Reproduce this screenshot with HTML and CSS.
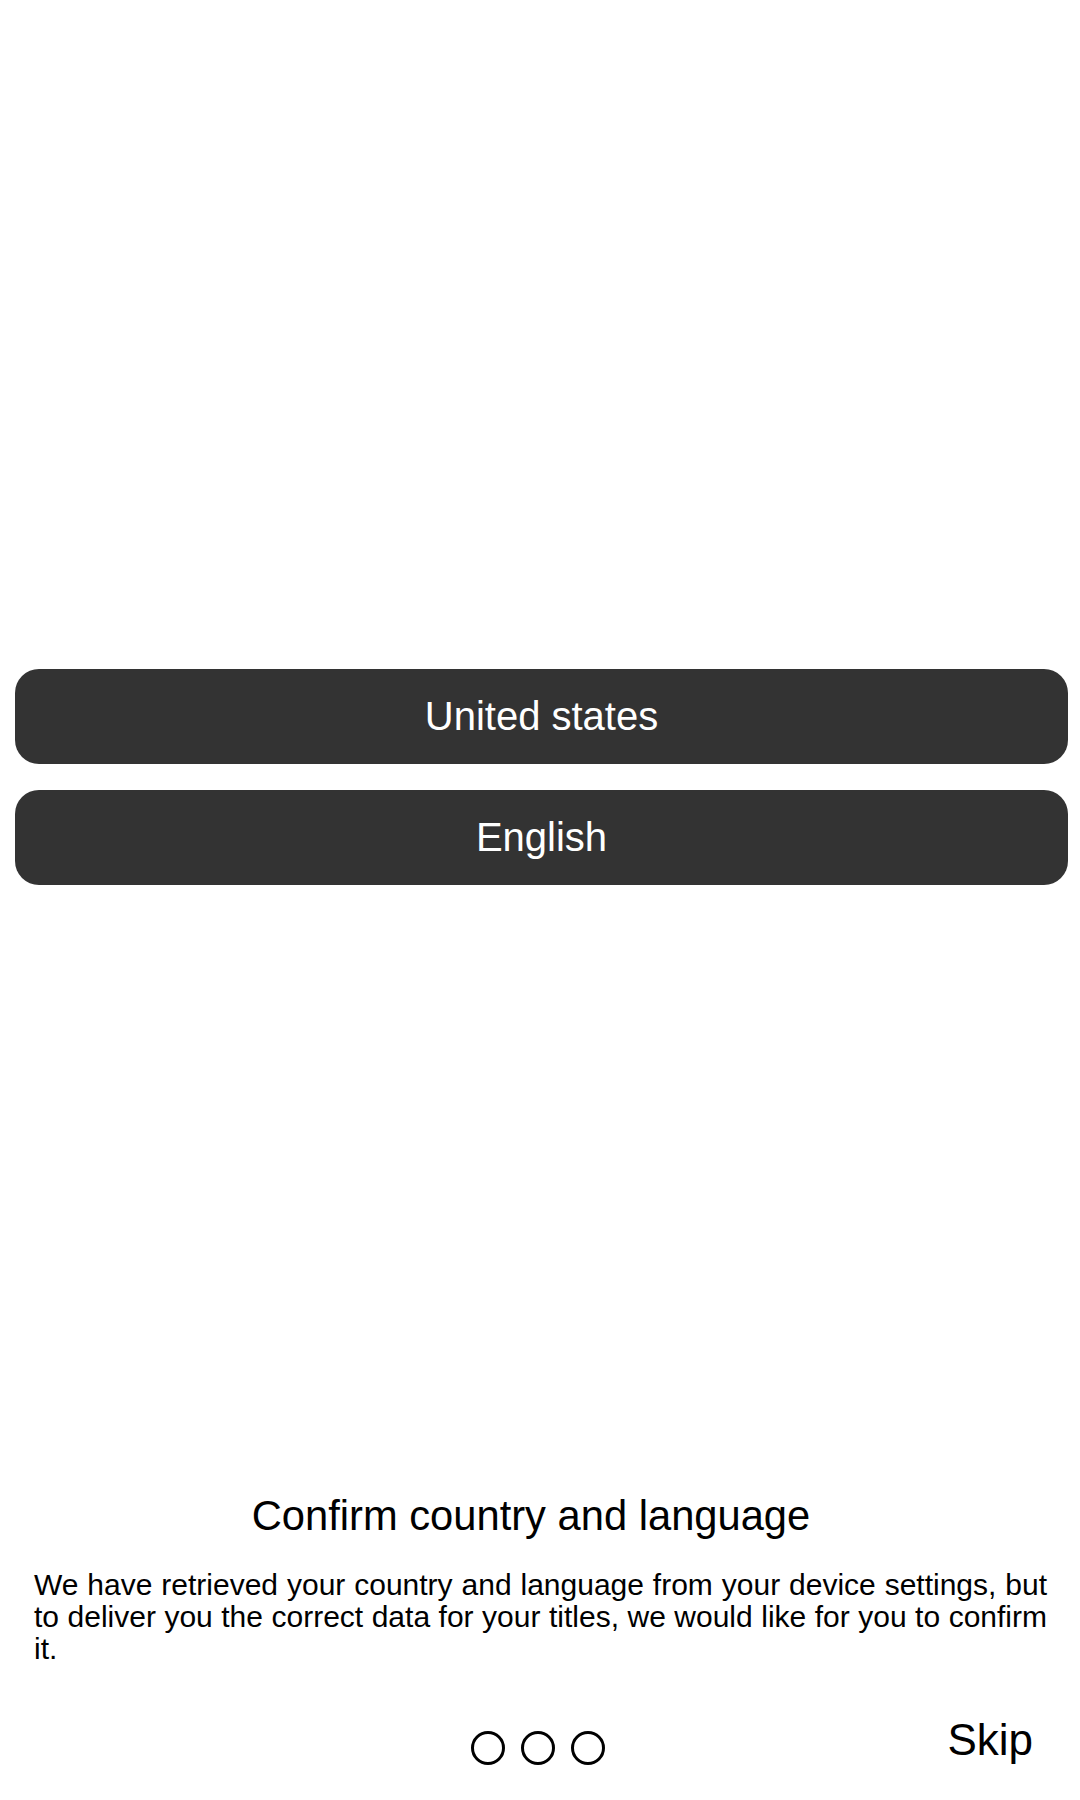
FILE: index.html
```html
<!DOCTYPE html>
<html lang="en">
<head>
<meta charset="utf-8">
<title>Confirm country and language</title>
<link rel="stylesheet" href="styles.css">
</head>
<body>
<div class="screen">
  <main class="options">
    <button class="option">United states</button>
    <button class="option">English</button>
  </main>
  <section class="info">
    <h1 class="info-title">Confirm country and language</h1>
    <p class="info-text">We have retrieved your country and language from your device settings, but to deliver you the correct data for your titles, we would like for you to confirm it.</p>
  </section>
  <footer class="footer">
    <div class="dots">
      <span class="dot"></span>
      <span class="dot"></span>
      <span class="dot"></span>
    </div>
    <span class="skip">Skip</span>
  </footer>
</div>
</body>
</html>
```
FILE: styles.css
```css
html, body {
  margin: 0;
  padding: 0;
  background: #ffffff;
}
body {
  font-family: "Liberation Sans", Arial, sans-serif;
  color: #000000;
}
.screen {
  width: 1080px;
  height: 1800px;
  display: flex;
  flex-direction: column;
  box-sizing: border-box;
}
.options {
  padding: 669px 12px 0 15px;
  display: flex;
  flex-direction: column;
  gap: 26px;
}
.option {
  height: 95px;
  border: none;
  border-radius: 24px;
  background: #333333;
  color: #ffffff;
  font-family: "Liberation Sans", Arial, sans-serif;
  font-size: 40px;
  padding: 0;
  margin: 0;
  width: 100%;
}
.info {
  margin-top: 607px;
  padding: 0 33px 0 34px;
}
.info-title {
  margin: 0;
  padding-right: 19px;
  text-align: center;
  font-weight: normal;
  font-size: 41.7px;
  line-height: 47px;
}
.info-text {
  margin: 30px 0 0;
  font-size: 30px;
  line-height: 32px;
  text-align: justify;
}
.footer {
  margin-top: 45px;
  display: grid;
  grid-template-columns: 1fr auto 1fr;
  align-items: start;
}
.dots {
  grid-column: 2;
  display: flex;
  gap: 16px;
  margin-top: 21px;
  margin-right: 4px;
}
.dot {
  width: 34px;
  height: 34px;
  box-sizing: border-box;
  border: 3px solid #000000;
  border-radius: 50%;
}
.skip {
  grid-column: 3;
  justify-self: end;
  margin: 5px 47px 0 0;
  font-size: 44px;
  line-height: 50px;
}
```
